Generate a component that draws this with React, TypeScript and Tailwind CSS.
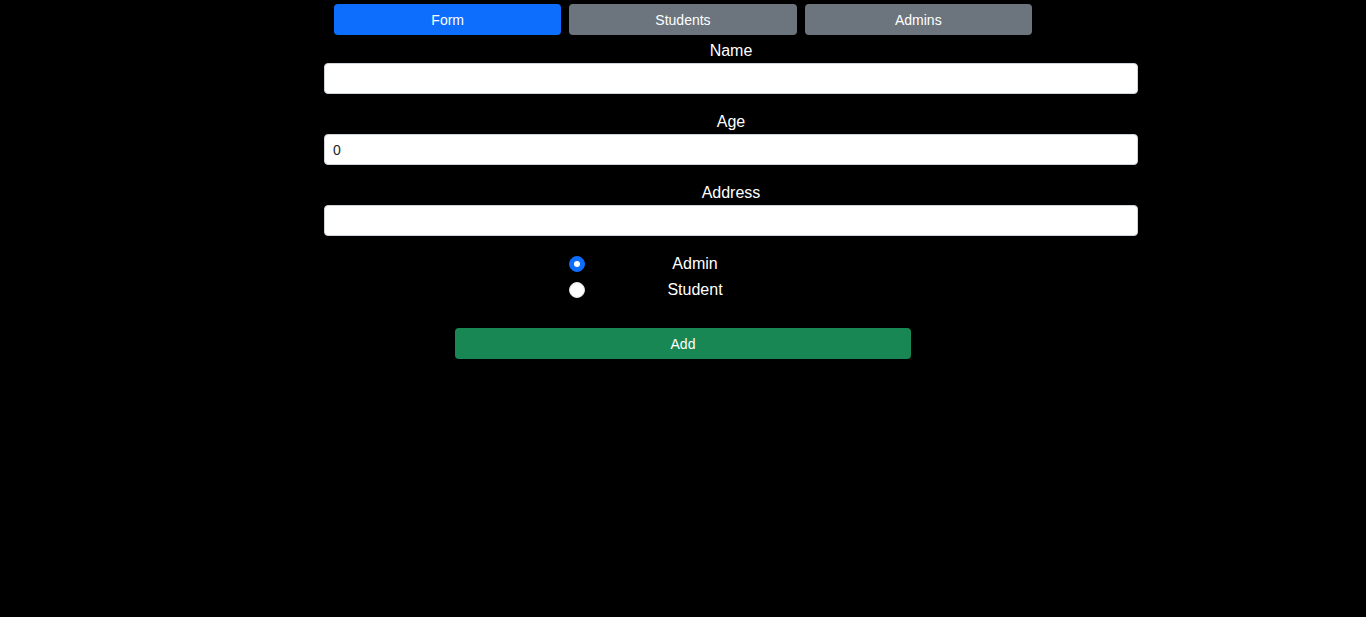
import React, { useState } from 'react';

const tabs = ['Form', 'Students', 'Admins'];

const Field = ({ label, value }: { label: string; value?: string }) => (
    <div className="flex flex-col">
        <label className="h-6 leading-6 text-center text-base text-white">{label}</label>
        <input
            className="h-[31px] w-full rounded-[4px] border border-[#ced4da] bg-white px-2 text-sm text-[#212529] outline-none"
            defaultValue={value}
        />
    </div>
);

export default function App() {
    const [role, setRole] = useState('admin');
    return (
        <div className="min-h-[617px] w-full bg-black font-['Liberation_Sans',Arial,sans-serif]">
            <div className="ml-[334px] grid w-[698px] grid-cols-3 gap-2 pt-1">
                {tabs.map((t, i) => (
                    <button
                        key={t}
                        className={`h-[31px] rounded-[4px] text-sm text-white ${i === 0 ? 'bg-[#0d6efd]' : 'bg-[#6c757d]'}`}
                    >
                        {t}
                    </button>
                ))}
            </div>

            <div className="ml-[324px] mt-1 flex w-[814px] flex-col gap-4">
                <Field label="Name" />
                <Field label="Age" value="0" />
                <Field label="Address" />
            </div>

            <div className="ml-[569px] mt-[15px] flex flex-col">
                {[
                    ['admin', 'Admin'],
                    ['student', 'Student'],
                ].map(([v, l]) => (
                    <label key={v} className="flex h-[26px] items-center">
                        <span
                            onClick={() => setRole(v)}
                            className={`flex h-4 w-4 items-center justify-center rounded-full border ${role === v ? 'border-[#0d6efd] bg-[#0d6efd]' : 'border-[#dee2e6] bg-white'}`}
                        >
                            {role === v && <span className="h-[6px] w-[6px] rounded-full bg-white" />}
                        </span>
                        <span className="w-[220px] text-center text-base text-white">{l}</span>
                    </label>
                ))}
            </div>

            <div className="mt-[25px] flex justify-center">
                <button className="h-[31px] w-[456px] rounded-[4px] bg-[#198754] text-sm text-white">Add</button>
            </div>
        </div>
    );
}
